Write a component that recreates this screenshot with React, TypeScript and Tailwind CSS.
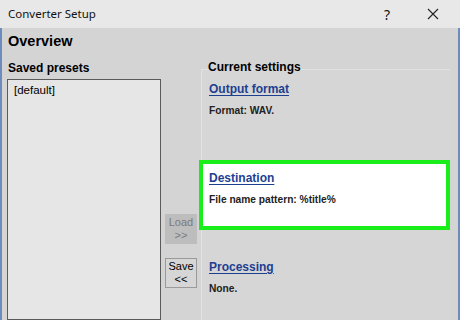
import React from "react";

const sections = [
  { title: "Output format", desc: "Format: WAV.", active: false },
  { title: "Destination", desc: "File name pattern: %title%", active: true },
  { title: "Processing", desc: "None.", active: false },
];

const App: React.FC = () => {
  return (
    <div className="w-[460px] h-[320px] overflow-hidden bg-[#d4d4d4] flex flex-col font-['Noto_Sans',sans-serif] text-black">
      {/* Title bar */}
      <div className="h-[28px] shrink-0 bg-[#e8e8e8] flex items-center pl-[8px] text-[11.5px] text-[#111]">
        <span className="flex-1">Converter Setup</span>
        <span className="w-[46px] text-center text-[14px]">?</span>
        <span className="w-[46px] flex justify-center mr-[4px]">
          <svg width="12" height="12" viewBox="0 0 12 12" stroke="#222" strokeWidth="1.1">
            <path d="M1 1L11 11M11 1L1 11" />
          </svg>
        </span>
      </div>

      {/* Body */}
      <div className="flex-1 flex flex-col border-l-[2px] border-r-[2px] border-[#6d8cbd] font-['Liberation_Sans',sans-serif]">
        <div className="h-[27px] shrink-0 pl-[6px] flex items-center text-[14.5px] font-bold">Overview</div>

        <div className="flex-1 flex">
          {/* Saved presets */}
          <div className="w-[154px] ml-[5px] flex flex-col">
            <div className="h-[24px] pt-[5px] leading-[16px] text-[12px] font-bold pl-[1px]">Saved presets</div>
            <div className="flex-1 bg-[#e6e6e6] border border-[#5a5a5a] px-[6px] pt-[2px] text-[11.5px] leading-[16px]">
              [default]
            </div>
          </div>

          {/* Load / Save buttons */}
          <div className="w-[32px] ml-[4px] flex flex-col">
            <div className="mt-[159px] h-[30px] bg-[#bdbdbd] text-[#7a7a7a] text-[11px] leading-[13px] flex flex-col items-center justify-center">
              <span>Load</span>
              <span>&gt;&gt;</span>
            </div>
            <div className="mt-[14px] h-[30px] bg-[#d6d6d6] border border-[#9a9a9a] text-[11px] leading-[13px] flex flex-col items-center justify-center">
              <span>Save</span>
              <span>&lt;&lt;</span>
            </div>
          </div>

          {/* Current settings */}
          <div className="w-[253px] ml-[2px] flex flex-col">
            <div className="relative z-10 h-[14px] pt-[4px] leading-[16px] pl-[9px] text-[12px] font-bold whitespace-nowrap">
              Current settings
            </div>
            <div className="flex-1 ml-[2px] mr-[2px] border-l border-t border-[#e2e2e2] bg-[#d6d6d6] pt-[1px] flex flex-col gap-[19px]">
              {sections.map((s) => (
                <div
                  key={s.title}
                  className={`-ml-[3px] w-[251px] h-[70px] border-[4px] pl-[6px] pt-[7px] ${
                    s.active ? "border-[#1aee1a] bg-white" : "border-transparent"
                  }`}
                >
                  <div className="text-[12px] leading-[14px] font-bold text-[#1d3f92] underline underline-offset-2">
                    {s.title}
                  </div>
                  <div className="mt-[8px] text-[10.2px] leading-[14px] font-semibold text-[#222]">{s.desc}</div>
                </div>
              ))}
            </div>
          </div>
        </div>
      </div>
    </div>
  );
};

export default App;
